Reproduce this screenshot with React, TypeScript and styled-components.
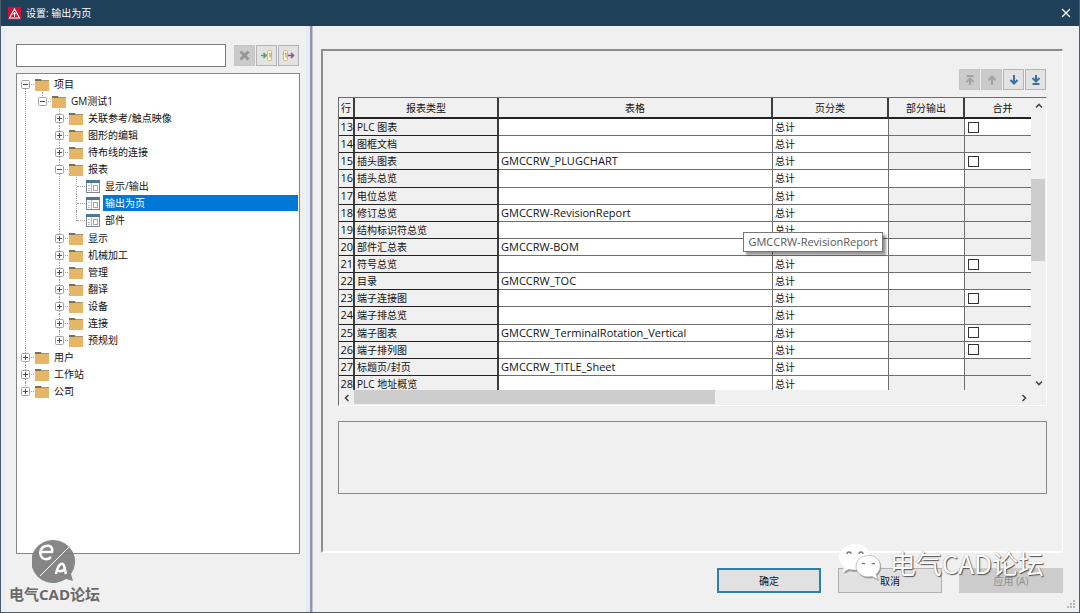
import React from "react";
import styled, { createGlobalStyle, css } from "styled-components";

const GlobalStyle = createGlobalStyle`
  *, *::before, *::after { box-sizing: border-box; }
  body { margin: 0; background: #f0f0f0; }
  body, button, input, table {
    font-family: "Open Sans", "Noto Sans CJK SC", sans-serif;
    font-size: 10px;
    line-height: 16px;
    color: #111;
  }
`;

const Dialog = styled.div`
  position: relative;
  display: flex;
  flex-direction: column;
  min-height: 100vh;
  background: #f0f0f0;
  border: 1px solid #4d5c6c;
  border-top: 0;
`;

const TitleBar = styled.header`
  display: flex;
  align-items: center;
  height: 26px;
  padding: 0 8px 0 7px;
  background: #1e4059;
  color: #fff;
`;

const Title = styled.h1`
  flex: 1;
  margin: 0 0 0 5px;
  font-size: 10px;
  font-weight: 400;
  line-height: 16px;
`;

const CloseButton = styled.button`
  display: flex;
  padding: 0;
  border: 0;
  background: none;
`;

const Body = styled.div`
  flex: 1;
  display: flex;
`;

const SidePane = styled.aside`
  display: flex;
  flex-direction: column;
  width: 309px;
  padding: 18px 6px 58px 11px;
  border-left: 4px solid #e9edf5;
  border-right: 4px solid #e6e9f6;
`;

const Splitter = styled.div`
  width: 3px;
  background: #9494a6;
  border-right: 1px solid #c4c4d2;
`;

const SearchRow = styled.div`
  display: flex;
  align-items: center;
  gap: 1px;
  margin: 0 1px 6px 0;
`;

const SearchBox = styled.input`
  flex: 1;
  min-width: 0;
  height: 23px;
  margin-right: 7px;
  padding: 0 4px;
  border: 1px solid #7a7a7a;
  background: #fff;
`;

const IconButton = styled.button`
  display: flex;
  align-items: center;
  justify-content: center;
  width: 21px;
  height: 21px;
  padding: 0;
  border: 1px solid #b4b4b4;
  background: #e3e3e3;
  &:disabled {
    border-color: #c6c6c6;
    background: #cbcbcb;
  }
`;

const TreeBox = styled.nav`
  flex: 1;
  padding: 1px 0;
  border: 1px solid #82858c;
  background: #fff;
`;

const Branch = styled.ul`
  margin: 0;
  padding: 0;
  list-style: none;
  & & {
    padding-left: 17px;
  }
  & & & & {
    padding-bottom: 1px;
  }
`;

const Node = styled.li`
  position: relative;
  &::before {
    content: "";
    position: absolute;
    left: 8px;
    top: 0;
    bottom: 0;
    border-left: 1px dotted #a0a0a0;
  }
  &:last-child::before {
    bottom: auto;
    height: 10px;
  }
`;

const RootNode = styled(Node)`
  &:first-child::before {
    top: 10px;
  }
`;

const NodeRow = styled.div`
  display: flex;
  align-items: center;
  height: 17px;
`;

const NodeMark = styled.span`
  display: flex;
  align-items: center;
  height: 17px;
  padding-top: 2px;
`;

const Connector = styled.span`
  position: relative;
  display: flex;
  align-items: center;
  justify-content: center;
  width: 17px;
  height: 15px;
  margin-right: 1px;
  &::before {
    content: "";
    position: absolute;
    left: 9px;
    right: 0;
    top: 7px;
    border-top: 1px dotted #a0a0a0;
  }
`;

const NodeLabel = styled.span<{ $selected?: boolean }>`
  margin-left: 3px;
  padding-left: 2px;
  line-height: 16px;
  ${(p) =>
    p.$selected &&
    css`
      flex: 1;
      margin-right: 1px;
      background: #0078d7;
      color: #fff;
    `}
`;

const MainPane = styled.main`
  flex: 1;
  min-width: 0;
  display: flex;
  flex-direction: column;
  padding: 23px 16px 19px 8px;
`;

const SettingsPanel = styled.section`
  flex: 1;
  display: flex;
  flex-direction: column;
  padding: 18px 15px;
  border: 2px solid #fff;
  border-top-color: #8c8c8c;
  border-left-color: #8c8c8c;
  border-right-width: 1px;
`;

const MoveBar = styled.div`
  display: flex;
  justify-content: flex-end;
  gap: 1px;
  margin: 0 1px 7px 0;
`;

const GridFrame = styled.div`
  position: relative;
  display: grid;
  grid-template-columns: minmax(0, 1fr) 15px;
  border: 1px solid #fff;
  border-top-color: #6c6c6c;
  border-left-color: #6c6c6c;
`;

const GridView = styled.div`
  height: 292px;
  overflow: hidden;
`;

const Grid = styled.table`
  width: calc(100% + 11px);
  height: 295px;
  table-layout: fixed;
  border-collapse: separate;
  border-spacing: 0;
  background: #fff;
`;

const Col = styled.col<{ $w?: number }>`
  width: ${(p) => (p.$w ? `${p.$w}px` : "auto")};
`;

const HeadCell = styled.th`
  height: 21px;
  padding: 0;
  border-right: 2px solid #3c3c3c;
  border-bottom: 2px solid #222;
  background: #f0f0f0;
  font-weight: 400;
`;

const RowHead = styled.th<{ $number?: boolean }>`
  height: 17px;
  padding: ${(p) => (p.$number ? "0" : "0 2px")};
  border-right: 2px solid #3c3c3c;
  border-bottom: 1px solid #222;
  background: #f0f0f0;
  font-size: ${(p) => (p.$number ? "11px" : "10px")};
  font-weight: 400;
  line-height: 16px;
  text-align: ${(p) => (p.$number ? "right" : "left")};
  white-space: nowrap;
`;

const Cell = styled.td<{ $off?: boolean }>`
  height: 17px;
  padding: 0 2px;
  border-right: 1px solid #6e6e6e;
  border-bottom: 1px solid #6e6e6e;
  background: ${(p) => (p.$off ? "#f0f0f0" : "#fff")};
  line-height: 16px;
  white-space: nowrap;
`;

const Tick = styled.input`
  appearance: none;
  display: block;
  width: 11px;
  height: 11px;
  margin: 0 1px;
  border: 1px solid #333;
  background: #fff;
`;

const ScrollBar = styled.div<{ $across?: boolean }>`
  display: flex;
  flex-direction: ${(p) => (p.$across ? "row" : "column")};
  ${(p) => (p.$across ? "height: 15px;" : "width: 15px; padding-right: 1px;")}
  background: #f0f0f0;
`;

const ScrollArrow = styled.button`
  display: flex;
  align-items: center;
  justify-content: center;
  width: 15px;
  height: 15px;
  padding: 0;
  border: 0;
  background: none;
`;

const Track = styled.div<{ $across?: boolean }>`
  flex: 1;
  display: flex;
  flex-direction: ${(p) => (p.$across ? "row" : "column")};
`;

const Gap = styled.div<{ $share: number }>`
  flex: ${(p) => p.$share};
`;

const Thumb = styled.div<{ $share: number }>`
  flex: ${(p) => p.$share};
  margin-bottom: 1px;
  background: #cdcdcd;
`;

const Tooltip = styled.div`
  position: absolute;
  top: 134px;
  right: 163px;
  padding: 0 4px;
  border: 1px solid #767676;
  background: #fff;
  box-shadow: 3px 3px 2px rgba(0, 0, 0, 0.4);
  color: #575757;
  font-size: 11px;
  line-height: 18px;
`;

const Description = styled.div`
  height: 73px;
  margin: 15px 0 0;
  border: 1px solid #8a8a8a;
`;

const Footer = styled.footer`
  display: flex;
  justify-content: flex-end;
  gap: 17px;
  margin-top: 15px;
`;

const PushButton = styled.button<{ $primary?: boolean }>`
  width: 104px;
  height: 25px;
  padding: 0;
  border: ${(p) => (p.$primary ? "2px solid #2f7fae" : "1px solid #b0b0b0")};
  background: #e1e1e1;
  &:disabled {
    border-color: #cccccc;
    background: #cccccc;
    color: #8e8e8e;
  }
`;

const SizeGrip = styled.svg`
  position: absolute;
  right: 3px;
  bottom: 3px;
`;

const ForumBadge = styled.div`
  position: absolute;
  left: 8px;
  bottom: 8px;
  display: flex;
  flex-direction: column;
  align-items: center;
  color: #6a6a6a;
  font-size: 15px;
  font-weight: 700;
  line-height: 20px;
`;

const AccountMark = styled.div`
  position: absolute;
  right: 35px;
  bottom: 29px;
  display: flex;
  align-items: center;
  gap: 7px;
  pointer-events: none;
  color: #fff;
  font-family: "Noto Sans CJK SC", sans-serif;
  font-size: 26px;
  line-height: 40px;
  text-shadow: 1px 1px 1px #555, 0 0 1px #888;
`;

function FolderIcon() {
  return (
    <svg width="14" height="13" viewBox="0 0 14 13" aria-hidden="true">
      <path d="M0 1 h6 l1 2 h7 v2 H0z" fill="#77705c" />
      <path d="M0 3 h6 l1 0 h7 v10 H0z" fill="#e6b566" />
      <path d="M6 2.5 h8" stroke="#a59267" />
    </svg>
  );
}

function PageIcon() {
  return (
    <svg width="14" height="13" viewBox="0 0 14 13" aria-hidden="true">
      <rect x="0.5" y="0.5" width="13" height="12" fill="#fff" stroke="#7d8790" />
      <rect width="14" height="3" fill="#4d7794" />
      <path d="M2 5.5h2M2 8.5h2M2 10.500h2M5.500 3v9" stroke="#b5bac2" />
      <rect x="7.500" y="5.500" width="4" height="5" fill="none" stroke="#a0a6b4" />
    </svg>
  );
}

const ExpanderBox = styled.svg`
  position: relative;
`;

function Expander({ open }: { open: boolean }) {
  return (
    <ExpanderBox width="9" height="9" viewBox="0 0 9 9" aria-hidden="true">
      <rect x="0.5" y="0.5" width="8" height="8" rx="1" fill="#fff" stroke="#a2a2a2" />
      <path d={open ? "M2 4.5h5" : "M2 4.5h5M4.5 2v5"} stroke="#4a4a4a" />
    </ExpanderBox>
  );
}

type Arrow = "top" | "up" | "down" | "bottom";

function ArrowIcon({ kind }: { kind: Arrow }) {
  const flip = kind === "down" || kind === "bottom";
  const colour = flip ? "#3a70a3" : "#a2a2a2";
  return (
    <svg width="12" height="12" viewBox="0 0 12 12" fill="none" stroke={colour} strokeWidth="2" aria-hidden="true">
      <g transform={flip ? "rotate(180 6 6)" : undefined}>
        {kind === "top" || kind === "bottom" ? (
          <path d="M2.500 2h7M6 11V4M2.500 8 6 4.500l3.500 3.500" />
        ) : (
          <path d="M6 11V2.500M2.500 6 6 2.500l3.500 3.500" />
        )}
      </g>
    </svg>
  );
}

function Chevron({ turn }: { turn: number }) {
  return (
    <svg width="8" height="8" viewBox="0 0 8 8" fill="none" stroke="#484848" strokeWidth="1.6" aria-hidden="true">
      <path d="M1 5.5 4 2.5l3 3" transform={`rotate(${turn} 4 4)`} />
    </svg>
  );
}

interface TreeItem {
  name: string;
  open?: boolean;
  page?: boolean;
  selected?: boolean;
  items?: TreeItem[];
}

const closed = (name: string): TreeItem => ({ name });

const tree: TreeItem[] = [
  {
    name: "项目",
    open: true,
    items: [
      {
        name: "GM测试1",
        open: true,
        items: [
          closed("关联参考/触点映像"),
          closed("图形的编辑"),
          closed("待布线的连接"),
          {
            name: "报表",
            open: true,
            items: [
              { name: "显示/输出", page: true },
              { name: "输出为页", page: true, selected: true },
              { name: "部件", page: true },
            ],
          },
          closed("显示"),
          closed("机械加工"),
          closed("管理"),
          closed("翻译"),
          closed("设备"),
          closed("连接"),
          closed("预规划"),
        ],
      },
    ],
  },
  closed("用户"),
  closed("工作站"),
  closed("公司"),
];

function TreeNode({ item, root }: { item: TreeItem; root?: boolean }) {
  const Item = root ? RootNode : Node;
  return (
    <Item role="treeitem" aria-selected={!!item.selected} aria-expanded={item.page ? undefined : !!item.open}>
      <NodeRow>
        <NodeMark>
          <Connector>{!item.page && <Expander open={!!item.open} />}</Connector>
          {item.page ? <PageIcon /> : <FolderIcon />}
        </NodeMark>
        <NodeLabel $selected={item.selected}>{item.name}</NodeLabel>
      </NodeRow>
      {item.items && (
        <Branch role="group">
          {item.items.map((child) => (
            <TreeNode key={child.name} item={child} />
          ))}
        </Branch>
      )}
    </Item>
  );
}

interface Report {
  no: number;
  type: string;
  form?: string;
  partial?: boolean;
  merge?: boolean;
}

const reports: Report[] = [
  { no: 13, type: "PLC 图表", merge: true },
  { no: 14, type: "图框文档" },
  { no: 15, type: "插头图表", form: "GMCCRW_PLUGCHART", merge: true },
  { no: 16, type: "插头总览", partial: true },
  { no: 17, type: "电位总览" },
  { no: 18, type: "修订总览", form: "GMCCRW-RevisionReport" },
  { no: 19, type: "结构标识符总览" },
  { no: 20, type: "部件汇总表", form: "GMCCRW-BOM", partial: true },
  { no: 21, type: "符号总览", merge: true },
  { no: 22, type: "目录", form: "GMCCRW_TOC", partial: true },
  { no: 23, type: "端子连接图", merge: true },
  { no: 24, type: "端子排总览", partial: true },
  { no: 25, type: "端子图表", form: "GMCCRW_TerminalRotation_Vertical", merge: true },
  { no: 26, type: "端子排列图", merge: true },
  { no: 27, type: "标题页/封页", form: "GMCCRW_TITLE_Sheet", partial: true },
  { no: 28, type: "PLC 地址概览" },
];

const FormName = styled.span`
  font-size: 11px;
`;

export default function App() {
  return (
    <>
      <GlobalStyle />
      <Dialog>
        <TitleBar>
          <svg width="13" height="13" viewBox="0 0 13 13" aria-hidden="true">
            <rect width="13" height="13" fill="#cf1034" />
            <path d="M6.5 2 11.5 11h-10z" fill="none" stroke="#fff" strokeWidth="1.1" />
            <path d="M6.5 5v5M5 7.5l1.5-2 1.5 2" fill="none" stroke="#fff" />
          </svg>
          <Title>设置: 输出为页</Title>
          <CloseButton aria-label="关闭">
            <svg width="10" height="10" viewBox="0 0 10 10" stroke="#fff" strokeWidth="1.2" aria-hidden="true">
              <path d="M1 1l8 8M9 1l-8 8" />
            </svg>
          </CloseButton>
        </TitleBar>
        <Body>
          <SidePane>
            <SearchRow>
              <SearchBox aria-label="搜索" />
              <IconButton disabled aria-label="清除">
                <svg width="11" height="11" viewBox="0 0 11 11" stroke="#969696" strokeWidth="3" aria-hidden="true">
                  <path d="M1.5 1.5l8 8M9.5 1.5l-8 8" />
                </svg>
              </IconButton>
              <IconButton aria-label="导入">
                <svg width="13" height="13" viewBox="0 0 13 13" fill="none" aria-hidden="true">
                  <rect x="7.5" y="1.5" width="4" height="10" rx="1" fill="#fff6dc" stroke="#d8b070" />
                  <path d="M9 4.5h1v4" stroke="#b08a50" />
                  <path d="M1 6.5h5M3.500 4l2.500 2.500-2.500 2.500" stroke="#4aa564" strokeWidth="1.6" />
                </svg>
              </IconButton>
              <IconButton aria-label="导出">
                <svg width="13" height="13" viewBox="0 0 13 13" fill="none" aria-hidden="true">
                  <rect x="1.5" y="1.5" width="4" height="10" rx="1" fill="#fff6dc" stroke="#d8b070" />
                  <path d="M3 4.5h1v4" stroke="#b08a50" />
                  <path d="M6 6.5h5M9 4l2.500 2.500-2.500 2.500" stroke="#84539a" strokeWidth="1.6" />
                </svg>
              </IconButton>
            </SearchRow>
            <TreeBox aria-label="设置">
              <Branch role="tree">
                {tree.map((item) => (
                  <TreeNode key={item.name} item={item} root />
                ))}
              </Branch>
            </TreeBox>
          </SidePane>
          <Splitter />
          <MainPane>
            <SettingsPanel>
              <MoveBar>
                <IconButton disabled aria-label="移到顶部"><ArrowIcon kind="top" /></IconButton>
                <IconButton disabled aria-label="上移"><ArrowIcon kind="up" /></IconButton>
                <IconButton aria-label="下移"><ArrowIcon kind="down" /></IconButton>
                <IconButton aria-label="移到底部"><ArrowIcon kind="bottom" /></IconButton>
              </MoveBar>
              <GridFrame>
                <GridView>
                  <Grid>
                    <colgroup>
                      <Col $w={16} />
                      <Col $w={144} />
                      <Col />
                      <Col $w={116} />
                      <Col $w={76} />
                      <Col $w={77} />
                    </colgroup>
                    <thead>
                      <tr>
                        {["行", "报表类型", "表格", "页分类", "部分输出", "合并"].map((h) => (
                          <HeadCell key={h} scope="col">{h}</HeadCell>
                        ))}
                      </tr>
                    </thead>
                    <tbody>
                      {reports.map((r) => (
                        <tr key={r.no}>
                          <RowHead scope="row" $number>{r.no}</RowHead>
                          <RowHead scope="row">{r.type}</RowHead>
                          <Cell><FormName>{r.form}</FormName></Cell>
                          <Cell>总计</Cell>
                          <Cell $off={!r.partial} />
                          <Cell $off={!r.merge}>
                            {r.merge && <Tick type="checkbox" aria-label={`合并 ${r.type}`} />}
                          </Cell>
                        </tr>
                      ))}
                    </tbody>
                  </Grid>
                </GridView>
                <ScrollBar>
                  <ScrollArrow aria-label="向上滚动"><Chevron turn={0} /></ScrollArrow>
                  <Track>
                    <Gap $share={66} />
                    <Thumb $share={83} />
                    <Gap $share={113} />
                  </Track>
                  <ScrollArrow aria-label="向下滚动"><Chevron turn={180} /></ScrollArrow>
                </ScrollBar>
                <ScrollBar $across>
                  <ScrollArrow aria-label="向左滚动"><Chevron turn={270} /></ScrollArrow>
                  <Track $across>
                    <Thumb $share={361} />
                    <Gap $share={301} />
                  </Track>
                  <ScrollArrow aria-label="向右滚动"><Chevron turn={90} /></ScrollArrow>
                </ScrollBar>
                <Tooltip role="tooltip">GMCCRW-RevisionReport</Tooltip>
              </GridFrame>
              <Description />
            </SettingsPanel>
            <Footer>
              <PushButton $primary>确定</PushButton>
              <PushButton>取消</PushButton>
              <PushButton disabled>应用 (A)</PushButton>
            </Footer>
          </MainPane>
        </Body>
        <SizeGrip width="9" height="9" viewBox="0 0 9 9" fill="#b4b8b4" aria-hidden="true">
          <path d="M6 0h2v2H6zM3 3h2v2H3zM6 3h2v2H6zM0 6h2v2H0zM3 6h2v2H3zM6 6h2v2H6z" />
        </SizeGrip>
        <ForumBadge>
          <svg width="46" height="44" viewBox="0 0 46 44" fill="none" aria-hidden="true">
            <path d="M22 0a22 21.5 0 1 0 12 39l7 2-2-7A22 21.5 0 0 0 22 0z" fill="#7d7d7d" fillOpacity="0.92" />
            <path d="M8 36 38 6" stroke="#fff" />
            <path d="M9 12h11c1-5-2-7-6-6-5 1-7 6-5 10 2 4 7 4 10 1" stroke="#fff" strokeWidth="2.5" />
            <path d="M24 34c1-5 2-9 5-10 4-1 3 4 5 10M25 30c3 2 6 1 8-1" stroke="#fff" strokeWidth="2.5" />
          </svg>
          电气CAD论坛
        </ForumBadge>
        <AccountMark>
          <svg width="44" height="38" viewBox="0 0 44 38" aria-hidden="true">
            <g fill="#999" transform="translate(1 1)">
              <path d="M16 1C7 1 1 7 1 14c0 4 2 7 5 10l-2 5 6-3c10 3 22-2 22-12C32 7 25 1 16 1z" />
              <path d="M30 12c-8 0-13 5-13 11s6 12 16 10l6 3-2-5c8-7 4-19-7-19z" />
            </g>
            <path d="M16 0C7 0 0 6 0 13c0 4 2 7 5 10l-1 5 6-3c10 3 22-2 22-12C32 6 25 0 16 0z" fill="#fff" />
            <path d="M30 11.500c-8 0-13 5-13 11s6 12 16 10l6 3-2-5c8-7 4-19-7-19z" fill="#fff" stroke="#aaa" strokeWidth="0.7" />
            <path d="M8 10a2 2 0 0 1 4 0M20 10a2 2 0 0 1 4 0M23 20a2 2 0 0 1 3 0M33 20a2 2 0 0 1 3 0" fill="none" stroke="#777" strokeWidth="1.3" />
          </svg>
          电气CAD论坛
        </AccountMark>
      </Dialog>
    </>
  );
}
